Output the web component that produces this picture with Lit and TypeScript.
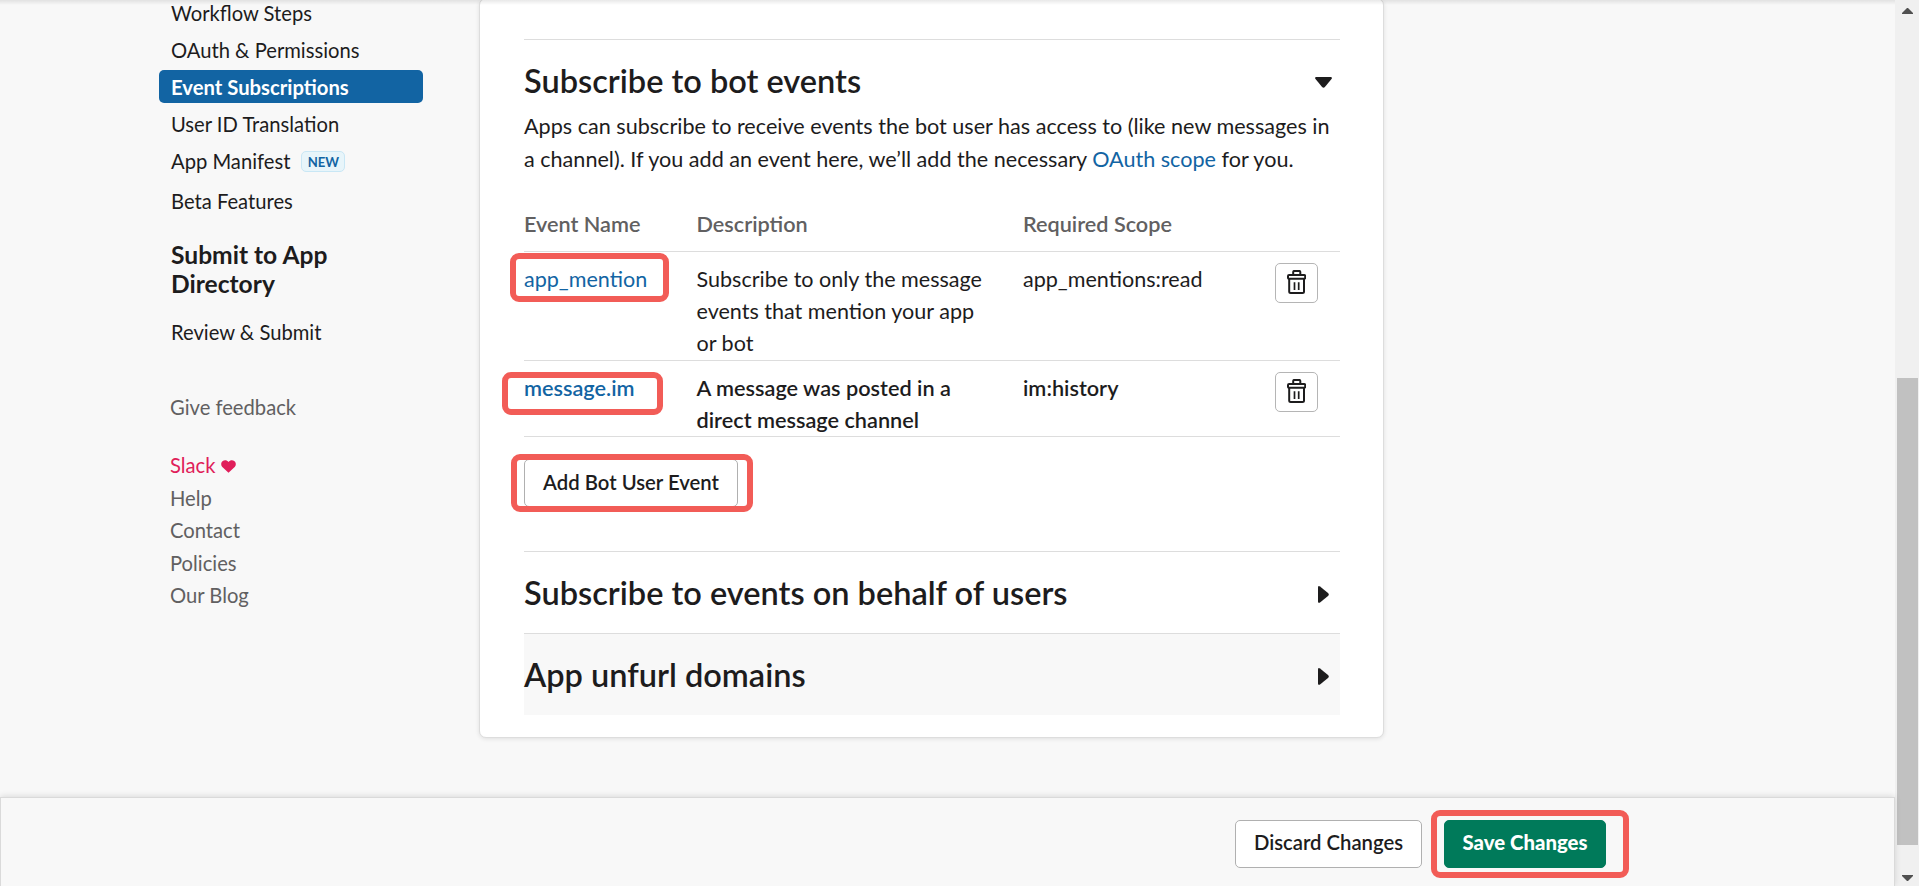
import { LitElement, html, css, svg } from "lit";
import { customElement, property } from "lit/decorators.js";
import { classMap } from "lit/directives/class-map.js";

interface BotEvent {
  name: string;
  description: string;
  scope: string;
  fresh: boolean;
}

const EVENTS: BotEvent[] = [
  {
    name: "app_mention",
    description: "Subscribe to only the message events that mention your app or bot",
    scope: "app_mentions:read",
    fresh: false,
  },
  {
    name: "message.im",
    description: "A message was posted in a direct message channel",
    scope: "im:history",
    fresh: true,
  },
];

const trash = svg`
  <path d="M6.2 4.8V2.1q0-1.200 1.200-1.200h4.700q1.200 0 1.200 1.200v2.700" />
  <rect x="1" y="5" width="17.2" height="3.8" rx="1.1" />
  <path d="M2.2 8.9v12.600q0 1.500 1.500 1.500h11.800q1.500 0 1.500-1.500V8.900" />
  <path d="M7.500 12.300v7.600M11.700 12.300v7.600" stroke-width="1.7" />`;

@customElement("side-nav")
export class SideNav extends LitElement {
  static styles = css`
    :host { display: block; width: 264px; color: #1d1c1d; font-size: 20.2px; line-height: 33px; }
    .item { height: 33px; padding-left: 12px; margin-bottom: 4px; border-radius: 5px; display: flex; align-items: center; }
    .item > .name { padding-top: 2px; }
    .active { background: #1264a3; color: #fff; font-weight: 700; font-size: 20.25px; }
    .tagged { margin-bottom: 7px; }
    .badge { box-sizing: border-box; width: 44px; height: 21px; margin: 2px 0 0 11px; border: 1px solid #c9e7f5; border-radius: 5px; background: #e8f5fa; color: #1264a3; font-size: 13.1px; font-weight: 700; line-height: 20px; text-align: center; }
    .title { margin: 23px 0 18px; padding-left: 12px; font-size: 24.6px; font-weight: 700; line-height: 29px; }
    .feedback { margin: 42px 0 25px; padding-left: 11px; color: #616061; }
    .links { padding-left: 11px; color: #616061; line-height: 32.6px; }
    .slack { display: flex; align-items: center; gap: 6px; color: #e01e5a; }
    .heart { width: 15px; height: 13px; margin-top: 2px; }
  `;
  render() {
    return html`
      <div class="item"><span class="name">Workflow Steps</span></div>
      <div class="item"><span class="name">OAuth &amp; Permissions</span></div>
      <div class="item active"><span class="name">Event Subscriptions</span></div>
      <div class="item"><span class="name">User ID Translation</span></div>
      <div class="item tagged"><span class="name">App Manifest</span><span class="badge">NEW</span></div>
      <div class="item"><span class="name">Beta Features</span></div>
      <div class="title">Submit to App<br />Directory</div>
      <div class="item">Review &amp; Submit</div>
      <div class="feedback">Give feedback</div>
      <div class="links">
        <div class="slack">
          Slack
          <svg class="heart" viewBox="0 0 15 13" fill="currentColor">
            <path d="M7.5 12.8 1.3 6.9C-.4 5.2 0 2.400 1.500 1.200 3.300-.4 6-.1 7.500 1.900 9-.1 11.700-.4 13.500 1.200 15 2.400 15.400 5.200 13.700 6.900Z" />
          </svg>
        </div>
        <div>Help</div>
        <div>Contact</div>
        <div>Policies</div>
        <div>Our Blog</div>
      </div>
    `;
  }
}

@customElement("section-head")
export class SectionHead extends LitElement {
  @property() label = "";
  @property({ type: Boolean }) open = false;
  @property({ type: Boolean }) shaded = false;
  static styles = css`
    :host { display: block; }
    .head { display: flex; align-items: center; justify-content: space-between; height: 81px; border-top: 1px solid #dddddd; }
    .head.open { height: 58px; padding-top: 12px; }
    .head.shaded { background: #f8f8f8; }
    .text { font-size: 32.5px; font-weight: 600; line-height: 40px; }
    .caret { display: block; margin: 3px 11px 0 0; fill: #1d1c1d; }
    .head.open .caret { margin: 3px 8px 0 0; }
  `;
  render() {
    return html`<div class=${classMap({ head: true, open: this.open, shaded: this.shaded })}>
      <div class="text">${this.label}</div>
      ${this.open
        ? html`<svg class="caret" width="17" height="11" viewBox="0 0 17 11"><path d="M1.200 0H15.800Q17.600.3 16.500 2L9.900 10Q8.500 11.600 7.100 10L.5 2Q-.6.3 1.200 0Z" /></svg>`
        : html`<svg class="caret" width="11" height="17" viewBox="0 0 11 17"><path d="M0 1.200V15.800Q.3 17.600 2 16.500L10 9.900Q11.600 8.500 10 7.100L2 .5Q.3-.6 0 1.200Z" /></svg>`}
    </div>`;
  }
}

@customElement("app-root")
export class AppRoot extends LitElement {
  static styles = css`
    :host { display: flex; width: 1919px; height: 886px; overflow: hidden; background: #f8f8f8; color: #1d1c1d; font-family: Lato, sans-serif; font-size: 21.55px; }
    .page { position: relative; display: flex; flex-direction: column; width: 1895px; height: 886px; }
    .topshade { position: absolute; left: 0; top: 0; width: 1895px; height: 5px; background: linear-gradient(rgba(0, 0, 0, 0.09), rgba(0, 0, 0, 0)); }
    .body { display: flex; flex: 1; min-height: 0; align-items: flex-start; gap: 56px; padding-left: 159px; }
    side-nav { margin-top: -4px; }
    .card { box-sizing: border-box; width: 905px; height: 740px; margin-top: -2px; padding: 40px 43px 0 44px; border: 1px solid #dddddd; border-radius: 7px; background: #fff; box-shadow: 0 1px 4px rgba(0, 0, 0, 0.1); }
    .intro { margin: 0; font-size: 21.6px; line-height: 33px; white-space: nowrap; }
    .link { color: #1264a3; }
    .row { display: grid; grid-template-columns: 172.5px 326.5px 252px 43px; line-height: 32px; padding-top: 11px; border-bottom: 1px solid #dddddd; }
    .row.labels { margin-top: 21px; padding: 11px 0; color: #616061; font-size: 21.65px; font-weight: 600; }
    .row.plain { padding-bottom: 1px; }
    .row.fresh { font-size: 21.7px; font-weight: 600; }
    .desc { padding-right: 30px; }
    .cell { position: relative; }
    .delete { box-sizing: border-box; display: flex; align-items: flex-start; justify-content: center; width: 43px; height: 40px; padding-top: 6px; border: 1px solid #b5b5b5; border-radius: 5px; }
    .icon { width: 19px; height: 24px; fill: none; stroke: #1d1c1d; stroke-width: 2; }
    .button { box-sizing: border-box; display: flex; align-items: center; justify-content: center; height: 48px; border: 1px solid #b0b0b0; border-radius: 5px; background: #fff; font-size: 20.3px; font-weight: 600; line-height: 24px; padding-bottom: 2px; }
    .add { position: relative; width: 214px; margin: 22px 0 44px; }
    .footer { box-sizing: border-box; display: flex; align-items: flex-start; gap: 22px; height: 89px; padding: 22px 0 0 1234px; border: 1px solid #dadada; border-bottom: 0; background: #f8f8f8; box-shadow: 0 -1px 6px rgba(0, 0, 0, 0.12); }
    .discard { width: 187px; padding-bottom: 4px; }
    .save { position: relative; width: 162px; padding-bottom: 4px; border-color: #007a5a; background: #007a5a; color: #fff; font-weight: 900; font-size: 20.35px; }
    .mark { position: absolute; box-sizing: border-box; border: 6px solid #f25c57; border-radius: 9px; }
    .mark-app { left: -14px; top: -10px; width: 159px; height: 49px; }
    .mark-im { left: -22px; top: 0; width: 161px; height: 43px; }
    .mark-add { left: -14px; top: -6px; width: 242px; height: 58px; }
    .mark-save { left: -14px; top: -11px; width: 198px; height: 68px; }
    .scrollbar { box-sizing: border-box; display: flex; flex-direction: column; align-items: center; width: 24px; height: 886px; padding: 8px 0 5px; background: #f0f0f0; }
    .arrow { display: block; width: 11px; height: 6px; margin-left: 1px; fill: #505050; }
    .thumb { width: 21px; height: 467px; margin: 364px 0 auto 1px; background: #c1c1c1; }
  `;
  render() {
    return html`
      <div class="page">
        <div class="body">
          <side-nav></side-nav>
          <div class="card">
            <section-head label="Subscribe to bot events" open></section-head>
            <p class="intro">
              Apps can subscribe to receive events the bot user has access to (like new messages in<br />a channel). If
              you add an event here, we’ll add the necessary <span class="link">OAuth scope</span> for you.
            </p>
            <div class="row labels"><span>Event Name</span><span>Description</span><span>Required Scope</span></div>
            ${EVENTS.map(
              (e) => html`<div class=${classMap({ row: true, fresh: e.fresh, plain: !e.fresh })}>
                <div class="cell">
                  <span class="link">${e.name}</span>
                  <div class=${classMap({ mark: true, "mark-app": !e.fresh, "mark-im": e.fresh })}></div>
                </div>
                <div class="desc">${e.description}</div>
                <div>${e.scope}</div>
                <div class="delete"><svg class="icon" viewBox="0 0 19 24">${trash}</svg></div>
              </div>`
            )}
            <div class="button add">Add Bot User Event<div class="mark mark-add"></div></div>
            <section-head label="Subscribe to events on behalf of users"></section-head>
            <section-head label="App unfurl domains" shaded></section-head>
          </div>
        </div>
        <div class="footer">
          <div class="button discard">Discard Changes</div>
          <div class="button save">Save Changes<div class="mark mark-save"></div></div>
        </div>
        <div class="topshade"></div>
      </div>
      <div class="scrollbar">
        <svg class="arrow" viewBox="0 0 11 6"><path d="M0 6V5L5 0H6L11 5V6Z" /></svg>
        <div class="thumb"></div>
        <svg class="arrow" viewBox="0 0 11 6"><path d="M0 0V1L5 6H6L11 1V0Z" /></svg>
      </div>
    `;
  }
}
